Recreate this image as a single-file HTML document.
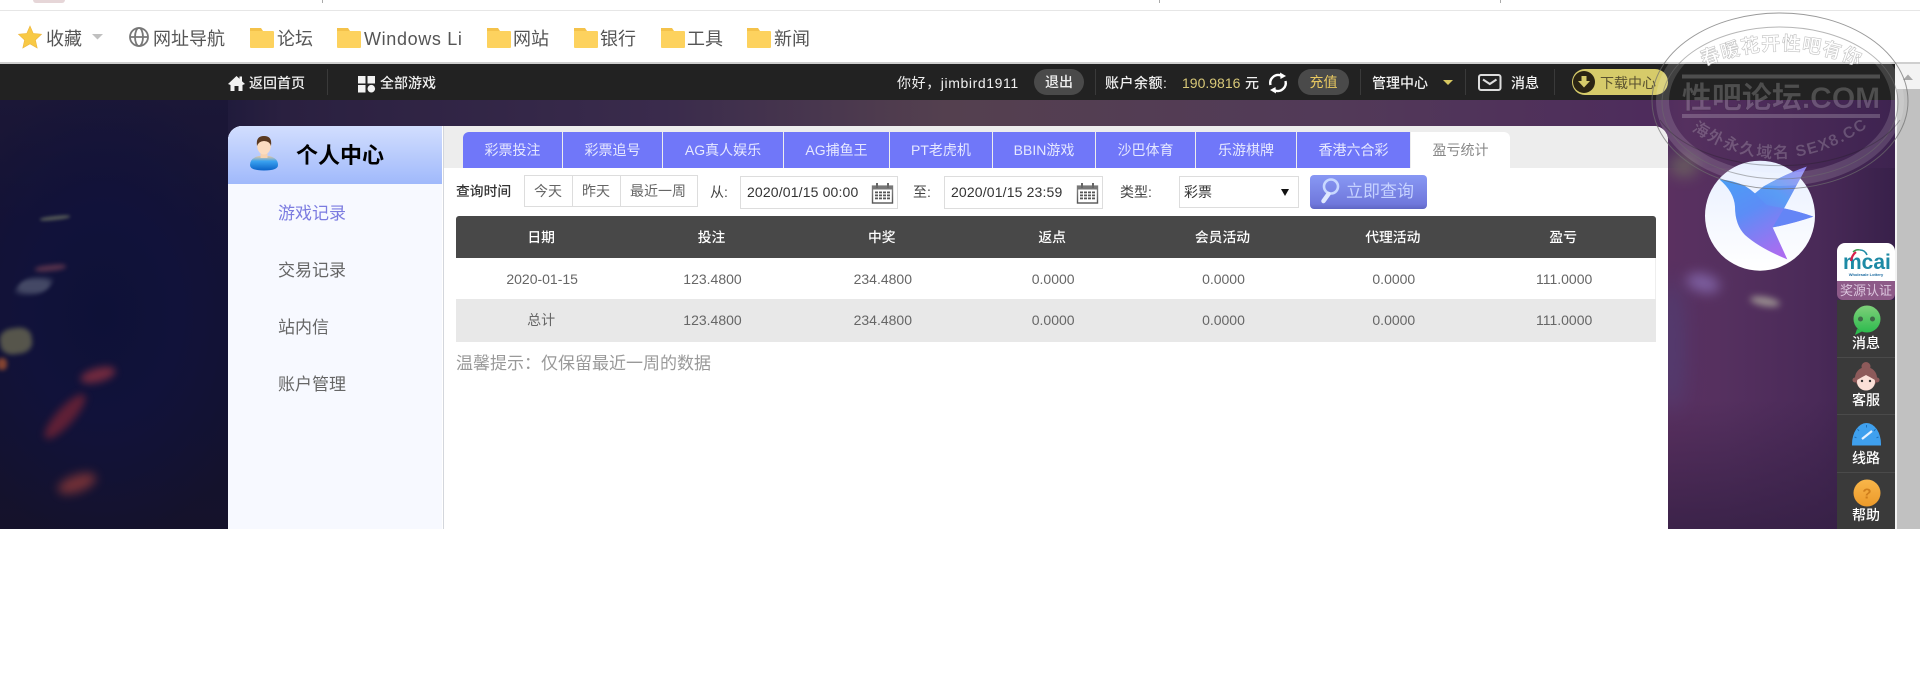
<!DOCTYPE html>
<html lang="zh-CN">
<head>
<meta charset="utf-8">
<title>个人中心</title>
<style>
html,body{margin:0;padding:0;width:1920px;height:697px;overflow:hidden;background:#fff;font-family:"Liberation Sans","Noto Sans CJK SC",sans-serif;}
.a{position:absolute;white-space:nowrap;}
.bm{font-size:18px;line-height:26px;top:26px;color:#555;}
.w{font-size:14px;line-height:20px;top:73px;color:#f0f0f0;font-weight:500;}
.tab{position:absolute;top:132px;height:36px;line-height:36px;text-align:center;background:#7077f9;color:#e6e8ff;font-size:14px;}
.q{font-size:14px;line-height:20px;color:#444;}
.row{position:absolute;left:456px;width:1200px;display:flex;font-size:14px;}
.row div{width:170.33px;text-align:center;flex:none;}
.side{position:absolute;left:1837px;width:58px;text-align:center;color:#fff;font-size:14px;line-height:20px;font-weight:500;}
.blob{position:absolute;filter:blur(3px);border-radius:40%;}
.m{left:278px;font-size:17px;line-height:24px;color:#666;}
.sep{position:absolute;top:69px;width:1px;height:26px;background:#3a3a3a;}
</style>
</head>
<body>
<!-- browser chrome -->
<div class="a" style="left:0;top:10px;width:1920px;height:1px;background:#e6e6e6"></div>
<div class="a" style="left:33px;top:0;width:32px;height:3px;background:#e6d6d8;border-radius:0 0 14px 14px"></div>
<div class="a" style="left:322px;top:0;width:1px;height:3px;background:#aaa"></div>
<div class="a" style="left:1159px;top:0;width:1px;height:3px;background:#aaa"></div>
<div class="a" style="left:1500px;top:0;width:1px;height:3px;background:#aaa"></div>
<div class="a" style="left:0;top:62px;width:1920px;height:2px;background:#cfcfcf"></div>

<div class="a bm" style="left:46px">收藏</div>
<div class="a bm" style="left:153px">网址导航</div>
<div class="a bm" style="left:277px">论坛</div>
<div class="a bm" style="left:364px;letter-spacing:.65px">Windows Li</div>
<div class="a bm" style="left:513px">网站</div>
<div class="a bm" style="left:600px">银行</div>
<div class="a bm" style="left:687px">工具</div>
<div class="a bm" style="left:774px">新闻</div>

<!-- hero background -->
<div class="a" style="left:0;top:100px;width:1895px;height:429px;overflow:hidden;background:linear-gradient(90deg,#1b1737 0,#1c1838 10%,#201b3c 12%,#2a2040 15%,#3a2b4c 35%,#54404f 50%,#523a58 70%,#4e2c5c 87%,#55305f 89%,#3e2350 100%)">
  <div class="a" style="left:0;top:0;width:228px;height:429px;background:radial-gradient(ellipse 170px 230px at 45% 50%,#0e1137 0,#11123a 45%,rgba(20,17,46,0) 100%),linear-gradient(180deg,#1b1737 0,#151333 30%,#13122f 70%,#15122b 100%)"></div>
  <div class="a" style="left:1668px;top:68px;width:227px;height:361px;background:linear-gradient(90deg,#5a3060 0,#55305f 25%,#4a2a58 65%,#38204a 100%)"></div>
  <div class="a" style="left:1668px;top:300px;width:227px;height:129px;background:linear-gradient(180deg,rgba(50,30,66,0),rgba(50,30,66,.75))"></div>
  <div class="blob" style="left:1660px;top:180px;width:22px;height:130px;background:#46508a;filter:blur(12px);opacity:.45"></div>
  <div class="blob" style="left:1670px;top:55px;width:28px;height:22px;background:#6f6a60;filter:blur(7px);opacity:.7"></div>
  <div class="blob" style="left:1686px;top:174px;width:34px;height:18px;background:#7d5fa0;transform:rotate(15deg);filter:blur(6px);border-radius:50%"></div>
  <div class="blob" style="left:1750px;top:197px;width:30px;height:9px;background:#9a8f90;transform:rotate(10deg);filter:blur(3.500px);border-radius:50%"></div>
  <div class="blob" style="left:40px;top:116px;width:30px;height:4px;background:#6a7060;transform:rotate(-6deg);filter:blur(1.500px);opacity:.75"></div>
  <div class="blob" style="left:35px;top:165px;width:31px;height:6px;background:#6a3a50;transform:rotate(-6deg);filter:blur(2.500px);opacity:.8"></div>
  <div class="blob" style="left:18px;top:178px;width:32px;height:16px;background:#5a6078;transform:skewX(-30deg);filter:blur(2.500px);opacity:.7"></div>
  <div class="blob" style="left:0;top:228px;width:32px;height:26px;background:#6d6c52;transform:rotate(-8deg);filter:blur(2.500px);opacity:.75"></div>
  <div class="blob" style="left:-3px;top:258px;width:10px;height:12px;background:#a05030;filter:blur(2px);opacity:.8"></div>
  <div class="blob" style="left:80px;top:268px;width:36px;height:14px;background:#8a3040;transform:rotate(-15deg);filter:blur(4px);opacity:.8;border-radius:50%"></div>
  <div class="blob" style="left:36px;top:308px;width:58px;height:17px;background:#7a2535;transform:rotate(-48deg);filter:blur(4px);opacity:.75;border-radius:50%"></div>
  <div class="blob" style="left:57px;top:375px;width:40px;height:17px;background:#8a3838;transform:rotate(-20deg);filter:blur(5px);opacity:.8;border-radius:50%"></div>
</div>

<!-- top dark bar -->
<div class="a" style="left:0;top:64px;width:1895px;height:36px;background:#222"></div>
<div class="a w" style="left:249px">返回首页</div>
<div class="sep" style="left:327px"></div>
<div class="a w" style="left:380px">全部游戏</div>
<div class="a w" style="left:897px;letter-spacing:.6px;font-weight:400">你好，jimbird1911</div>
<div class="a" style="left:1034px;top:69px;width:50px;height:26px;line-height:26px;border-radius:13px;background:#4a4a4a;color:#f0f0f0;font-size:14px;text-align:center;font-weight:500">退出</div>
<div class="sep" style="left:1095px"></div>
<div class="a w" style="left:1105px;letter-spacing:.5px">账户余额:</div>
<div class="a w" style="left:1182px;color:#d8c878;font-weight:400">190.9816</div>
<div class="a w" style="left:1245px">元</div>
<div class="a" style="left:1298px;top:69px;width:51px;height:26px;line-height:26px;border-radius:13px;background:#4a4a4a;color:#e8c860;font-size:14px;text-align:center">充值</div>
<div class="sep" style="left:1360px"></div>
<div class="a w" style="left:1372px">管理中心</div>
<div class="sep" style="left:1465px"></div>
<div class="a w" style="left:1511px">消息</div>
<div class="sep" style="left:1554px"></div>
<div class="a" style="left:1572px;top:69px;width:96px;height:26px;border-radius:13px;background:#d6cb6a"></div>
<div class="a w" style="left:1600px;color:#5a5230;font-weight:400">下载中心</div>

<!-- panel -->
<div class="a" style="left:228px;top:126px;width:1440px;height:403px;background:#fff;border-radius:14px 14px 0 0"></div>
<div class="a" style="left:228px;top:126px;width:214px;height:403px;background:#f7f9ff;border-radius:14px 0 0 0"></div>
<div class="a" style="left:228px;top:126px;width:214px;height:58px;background:linear-gradient(180deg,#d2defe,#a0b9fb);border-radius:14px 0 0 0"></div>
<div class="a" style="left:443px;top:126px;width:1px;height:403px;background:#d3d6dc"></div>
<div class="a" style="left:444px;top:126px;width:1224px;height:42px;background:#ededed;border-radius:0 14px 0 0"></div>
<div class="a" style="left:296px;top:140px;font-size:22px;line-height:32px;font-weight:700;color:#000">个人中心</div>
<div class="a m" style="top:202px;color:#7b7be0">游戏记录</div>
<div class="a m" style="top:259px">交易记录</div>
<div class="a m" style="top:316px">站内信</div>
<div class="a m" style="top:373px">账户管理</div>

<!-- tabs -->
<div class="tab" style="left:463px;width:99px;border-radius:6px 0 0 0">彩票投注</div>
<div class="tab" style="left:563px;width:99px">彩票追号</div>
<div class="tab" style="left:663px;width:120px">AG真人娱乐</div>
<div class="tab" style="left:784px;width:105px">AG捕鱼王</div>
<div class="tab" style="left:890px;width:102px">PT老虎机</div>
<div class="tab" style="left:993px;width:102px">BBIN游戏</div>
<div class="tab" style="left:1096px;width:99px">沙巴体育</div>
<div class="tab" style="left:1196px;width:100px">乐游棋牌</div>
<div class="tab" style="left:1297px;width:113px">香港六合彩</div>
<div class="tab" style="left:1411px;width:99px;background:#fff;color:#888;border-radius:0 6px 0 0">盈亏统计</div>

<!-- query row -->
<div class="a q" style="left:456px;top:182px;font-weight:500;color:#333;font-size:13.8px">查询时间</div>
<div class="a" style="left:524px;top:175px;width:172px;height:30px;border:1px solid #ddd"></div>
<div class="a" style="left:572px;top:176px;width:1px;height:30px;background:#ddd"></div>
<div class="a" style="left:620px;top:176px;width:1px;height:30px;background:#ddd"></div>
<div class="a q" style="left:534px;top:181px;color:#666">今天</div>
<div class="a q" style="left:582px;top:181px;color:#666">昨天</div>
<div class="a q" style="left:630px;top:181px;color:#666">最近一周</div>
<div class="a q" style="left:710px;top:182px">从:</div>
<div class="a" style="left:740px;top:176px;width:156px;height:31px;border:1px solid #ddd"></div>
<div class="a q" style="left:747px;top:182px;color:#333;letter-spacing:.15px">2020/01/15 00:00</div>
<div class="a q" style="left:913px;top:182px">至:</div>
<div class="a" style="left:944px;top:176px;width:157px;height:31px;border:1px solid #ddd"></div>
<div class="a q" style="left:951px;top:182px;color:#333;letter-spacing:.15px">2020/01/15 23:59</div>
<div class="a q" style="left:1120px;top:182px">类型:</div>
<div class="a" style="left:1179px;top:176px;width:118px;height:30px;border:1px solid #ddd"></div>
<div class="a q" style="left:1184px;top:182px;color:#333">彩票</div>
<div class="a" style="left:1310px;top:175px;width:117px;height:34px;border-radius:4px;background:linear-gradient(180deg,#8898f4,#7078dc 85%,#5f66c4)"></div>
<div class="a" style="left:1346px;top:179px;font-size:17px;line-height:26px;color:#c6d2ff">立即查询</div>

<!-- table -->
<div class="a" style="left:456px;top:216px;width:1200px;height:42px;background:#484848;border-radius:3px 3px 0 0"></div>
<div class="a" style="left:456px;top:258px;width:1199px;height:41px;border-right:1px solid #eee"></div>
<div class="a" style="left:456px;top:299px;width:1200px;height:43px;background:#e8e8e8"></div>
<div class="row" style="top:216px;line-height:43px;color:#fff;font-weight:500;font-size:13.8px"><div>日期</div><div>投注</div><div>中奖</div><div>返点</div><div>会员活动</div><div>代理活动</div><div>盈亏</div></div>
<div class="row" style="top:258px;left:457px;line-height:42px;color:#666"><div>2020-01-15</div><div>123.4800</div><div>234.4800</div><div>0.0000</div><div>0.0000</div><div>0.0000</div><div>111.0000</div></div>
<div class="row" style="top:299px;left:457px;line-height:43px;color:#666"><div style="margin-left:-1px;margin-right:1px">总计</div><div>123.4800</div><div>234.4800</div><div>0.0000</div><div>0.0000</div><div>0.0000</div><div>111.0000</div></div>
<div class="a" style="left:456px;top:352px;font-size:17px;line-height:24px;color:#999">温馨提示：仅保留最近一周的数据</div>

<!-- side widget -->
<div class="a" style="left:1837px;top:243px;width:58px;height:38px;background:#fff;border-radius:8px 8px 0 0"></div>
<div class="a" style="left:1837px;top:281px;width:58px;height:19px;background:#8d5a88;border-radius:0 0 6px 6px;color:#dcc6de;font-size:13px;line-height:19px;text-align:center">奖源认证</div>
<div class="a" style="left:1837px;top:300px;width:58px;height:229px;background:#3a3a3a"></div>
<div class="a" style="left:1837px;top:357px;width:58px;height:1px;background:#4a4a4a"></div>
<div class="a" style="left:1837px;top:414px;width:58px;height:1px;background:#4a4a4a"></div>
<div class="a" style="left:1837px;top:472px;width:58px;height:1px;background:#4a4a4a"></div>
<div class="side" style="top:333px">消息</div>
<div class="side" style="top:390px">客服</div>
<div class="side" style="top:448px">线路</div>
<div class="side" style="top:505px">帮助</div>
<div class="a" style="left:1843px;top:252px;width:47px;text-align:center;font-size:21px;line-height:22px;font-weight:700;color:#1d8aa5">mcai</div>
<div class="a" style="left:1843px;top:272px;width:46px;text-align:center;font-size:4px;line-height:5px;font-weight:700;color:#1a6aa0">Wholesale Lottery</div>

<!-- scrollbar -->
<div class="a" style="left:1895px;top:64px;width:25px;height:465px;background:#f3f3f3"></div>
<div class="a" style="left:1897px;top:89px;width:23px;height:440px;background:#c1c1c1"></div>

<!-- icons + watermark -->
<svg class="a" style="left:0;top:0" width="1920" height="697" viewBox="0 0 1920 697" xmlns="http://www.w3.org/2000/svg">
<defs>
<linearGradient id="bird" x1="0" y1="0" x2=".55" y2="1"><stop offset="0" stop-color="#45a3f5"/><stop offset=".5" stop-color="#5c8df6"/><stop offset="1" stop-color="#ac6cf0"/></linearGradient>
<linearGradient id="wing" x1="1" y1="0" x2="0" y2="1"><stop offset="0" stop-color="#9a84f0"/><stop offset=".6" stop-color="#5a9cf5"/><stop offset="1" stop-color="#5a9cf5" stop-opacity="0"/></linearGradient>
<linearGradient id="disc" x1="0" y1="0" x2="0" y2="1"><stop offset="0" stop-color="#e8efff"/><stop offset="1" stop-color="#fff"/></linearGradient>
<linearGradient id="grn" x1="0" y1="0" x2="0" y2="1"><stop offset="0" stop-color="#7fd07a"/><stop offset="1" stop-color="#2dbb4e"/></linearGradient>
<linearGradient id="org" x1="0" y1="0" x2="0" y2="1"><stop offset="0" stop-color="#f9b64a"/><stop offset="1" stop-color="#ec9a2a"/></linearGradient>
<linearGradient id="blue" x1="0" y1="0" x2="0" y2="1"><stop offset="0" stop-color="#e8c8a0"/><stop offset=".35" stop-color="#3ba3f0"/><stop offset="1" stop-color="#0a62c8"/></linearGradient>
<linearGradient id="cal" x1="0" y1="0" x2="0" y2="1"><stop offset="0" stop-color="#888"/><stop offset="1" stop-color="#555"/></linearGradient>
<path id="wmTop" d="M1695 70 Q1780 30 1868 70"/>
<path id="wmBot" d="M1688 128 Q1780 190 1872 124"/>
<g id="fold"><path d="M0 3 a1 1 0 0 1 1-1 h9 l2 3 h11 a1 1 0 0 1 1 1 v15 a1 1 0 0 1-1 1 h-22 a1 1 0 0 1-1-1z" fill="#fdd25e"/><path d="M0 2 h11 l2 3 h-13z" fill="#f4c24a"/></g>
<g id="calI"><rect x="0.5" y="3" width="20" height="17" fill="#fff" stroke="url(#cal)" stroke-width="1.4"/><rect x="0" y="3" width="21" height="3.5" fill="#777"/><rect x="4" y="0" width="2" height="5" fill="#666"/><rect x="15" y="0" width="2" height="5" fill="#666"/><g fill="#555"><rect x="3" y="8.5" width="15" height="1.8"/><rect x="3" y="11.5" width="15" height="1.8"/><rect x="3" y="14.5" width="15" height="1.8"/></g><g fill="#fff"><rect x="6" y="8" width="1" height="10"/><rect x="10" y="8" width="1" height="10"/><rect x="14" y="8" width="1" height="10"/></g></g>
</defs>

<!-- bookmarks -->
<polygon points="30,26 33.2,33.4 41.5,34.2 35.4,40 37.2,48 30,43.900 22.800,48 24.600,40 18.500,34.200 26.800,33.400" fill="#f8c945" stroke="#eeb53a" stroke-width=".6"/>
<polygon points="92,34 103,34 97.5,39.5" fill="#c0c0c0"/>
<g fill="none" stroke="#777" stroke-width="1.8"><circle cx="139" cy="37" r="9"/><ellipse cx="139" cy="37" rx="4" ry="9"/><path d="M130 37h18"/></g>
<use href="#fold" x="250" y="26"/><use href="#fold" x="337" y="26"/><use href="#fold" x="487" y="26"/><use href="#fold" x="574" y="26"/><use href="#fold" x="661" y="26"/><use href="#fold" x="747" y="26"/>

<!-- top bar icons -->
<path d="M228 84 L236.500 76 L239.500 78.800 L239.500 76.500 L242 76.500 L242 81.200 L245 84 L242.500 85 L242.500 91 L238.500 91 L238.500 86 L234.500 86 L234.500 91 L230.500 91 L230.500 85Z" fill="#f2f2f2"/>
<g fill="#f2f2f2"><rect x="358" y="76" width="7.500" height="7.500"/><rect x="367.500" y="76" width="7.500" height="7.500"/><rect x="358" y="85" width="7.500" height="7.500"/><circle cx="371.300" cy="88.700" r="3.800"/></g>
<g fill="none" stroke="#fff" stroke-width="2.400"><path d="M1270.500 85 A8 8 0 0 1 1281 75.500"/><path d="M1285.500 81 A8 8 0 0 1 1275 90.500"/></g>
<polygon points="1280,72.500 1286,76 1280.500,79" fill="#fff"/><polygon points="1276,93.500 1270,90 1275.500,87" fill="#fff"/>
<polygon points="1443,80 1453,80 1448,85" fill="#d8c860"/>
<rect x="1479" y="75" width="21.500" height="15" rx="2" fill="none" stroke="#ddd" stroke-width="2"/>
<path d="M1483 79.500 L1489.800 84 L1496.500 79.500" fill="none" stroke="#ddd" stroke-width="2"/>
<circle cx="1584" cy="82" r="11" fill="#2a2414"/>
<path d="M1581.500 76 h5 v5 h3.500 l-6 6.500 l-6-6.500 h3.500z" fill="#d6cb6a"/>

<!-- person -->
<path d="M250 165 Q250 158 259 156 L269 156 Q278 158 278 165 Q278 170.500 264 170.500 Q250 170.500 250 165Z" fill="url(#blue)"/>
<rect x="260.500" y="150" width="7" height="8" fill="#f6d2b0"/>
<ellipse cx="264" cy="146" rx="6.800" ry="8.500" fill="#fbdcc0"/>
<path d="M257 146 Q255.500 136 264 136 Q272.500 136 271 146 Q269.500 141 264 141 Q259 141 257 146Z" fill="#5a3a22"/>

<!-- calendars -->
<use href="#calI" x="872" y="183"/><use href="#calI" x="1077" y="183"/>
<polygon points="1281,189 1289,189 1285,196" fill="#111"/>
<!-- magnifier -->
<circle cx="1331" cy="186.500" r="7" fill="none" stroke="#c8d8ff" stroke-width="2.600"/>
<path d="M1328.500 194 L1323.500 201" stroke="#dfe8ff" stroke-width="4.500" stroke-linecap="round"/>

<!-- bird disc -->
<circle cx="1760" cy="215.700" r="55" fill="url(#disc)"/>
<g transform="translate(1660 150) scale(.3333)">
<path d="M178 88 Q225 92 255 108 Q272 118 285 130 L310 110 Q370 75 440 50 L372 175 Q420 185 460 200 Q395 222 338 232 L382 328 Q300 295 255 255 Q225 225 225 170 Q222 125 178 88Z" fill="url(#bird)"/>
<path d="M285 130 L310 110 Q370 75 440 50 L372 175 L320 165Z" fill="url(#wing)"/>
<path d="M372 175 Q420 185 460 200 Q395 222 338 232Z" fill="#6485f6"/>
</g>

<!-- side logo + icons -->
<path d="M1851 261 Q1852 255 1856 252" stroke="#d8204a" stroke-width="2.200" fill="none"/>
<path d="M1853 252 Q1856 249 1860 250" stroke="#3a9a50" stroke-width="1.400" fill="none"/>
<path d="M1860 250 Q1865 250 1867 255" stroke="#1d8aa5" stroke-width="1.600" fill="none"/>
<circle cx="1867" cy="319" r="13.500" fill="url(#grn)"/>
<path d="M1857 329 L1855 335 L1863 331Z" fill="#2dbb4e"/>
<circle cx="1860.500" cy="319" r="2.500" fill="#3f6a48"/><circle cx="1872.500" cy="319" r="2.500" fill="#3f6a48"/>
<circle cx="1866" cy="366.500" r="4.500" fill="#8d5a5a"/>
<circle cx="1866" cy="378" r="11" fill="#8d5a5a"/>
<circle cx="1855" cy="380" r="2.500" fill="#8d5a5a"/><circle cx="1877" cy="380" r="2.500" fill="#8d5a5a"/>
<ellipse cx="1866" cy="382" rx="9" ry="8.500" fill="#fbe0d8"/>
<path d="M1857 380 Q1860 372 1866 372 Q1872 372 1875 380 Q1868 376 1866 375 Q1864 376 1857 380Z" fill="#8d5a5a"/>
<circle cx="1862" cy="381" r="1.200" fill="#333"/><circle cx="1870" cy="381" r="1.200" fill="#333"/>
<path d="M1852 444 A14.500 21 0 0 1 1881 444 L1881 445.500 L1852 445.500Z" fill="#3fa0ee"/>
<path d="M1862 439 L1872 431" stroke="#e8f2ff" stroke-width="2.200"/>
<path d="M1866.500 425 v2.500 M1857.500 429 l1.500 2 M1875.500 429 l-1.500 2 M1854.500 437 l2 .8 M1878.500 437 l-2 .8" stroke="#1f6fb8" stroke-width="1"/>
<circle cx="1867" cy="493" r="13.500" fill="url(#org)"/>
<text x="1867" y="498.500" text-anchor="middle" font-size="15" font-weight="700" fill="#cf7e1c" font-family="Liberation Sans, sans-serif">?</text>

<!-- scrollbar arrow -->
<polygon points="1903,80 1913,80 1908,74.500" fill="#a8a8a8"/>

<!-- watermark -->
<g>
<path fill-rule="evenodd" d="M1656 101 a124 85 0 1 0 248 0 a124 85 0 1 0-248 0z M1669 101 a111 72 0 1 1 222 0 a111 72 0 1 1-222 0z" fill="rgba(255,255,255,.14)"/>
<ellipse cx="1780" cy="101" rx="128" ry="88" fill="none" stroke="rgba(110,110,110,.7)" stroke-width="1"/>
<ellipse cx="1780" cy="103" rx="118" ry="76" fill="none" stroke="rgba(110,110,110,.5)" stroke-width="1"/>
<path d="M1660 120 A128 70 0 0 0 1900 120" fill="none" stroke="rgba(30,30,30,.5)" stroke-width="1" opacity=".6"/>
<rect x="1682" y="74.500" width="198" height="4" fill="rgba(255,255,255,.2)"/>
<rect x="1682" y="114" width="198" height="4" fill="rgba(255,255,255,.2)"/>
<text x="1781" y="108" text-anchor="middle" font-size="30" font-weight="700" fill="rgba(255,255,255,.2)" stroke="rgba(0,0,0,.2)" stroke-width=".6" font-family="Liberation Sans, Noto Sans CJK SC, sans-serif">性吧论坛.COM</text>
<text font-size="19" font-weight="700" fill="rgba(255,255,255,.9)" stroke="rgba(120,120,120,.45)" stroke-width=".6" font-family="Liberation Sans, Noto Sans CJK SC, sans-serif" letter-spacing="1"><textPath href="#wmTop" startOffset="50%" text-anchor="middle">春暖花开性吧有你</textPath></text>
<text font-size="16" font-weight="700" fill="rgba(255,255,255,.2)" stroke="rgba(0,0,0,.12)" stroke-width=".4" font-family="Liberation Sans, Noto Sans CJK SC, sans-serif" letter-spacing="1.500"><textPath href="#wmBot" startOffset="50%" text-anchor="middle">海外永久域名 SEX8.CC</textPath></text>
</g>
</svg>
</body>
</html>
